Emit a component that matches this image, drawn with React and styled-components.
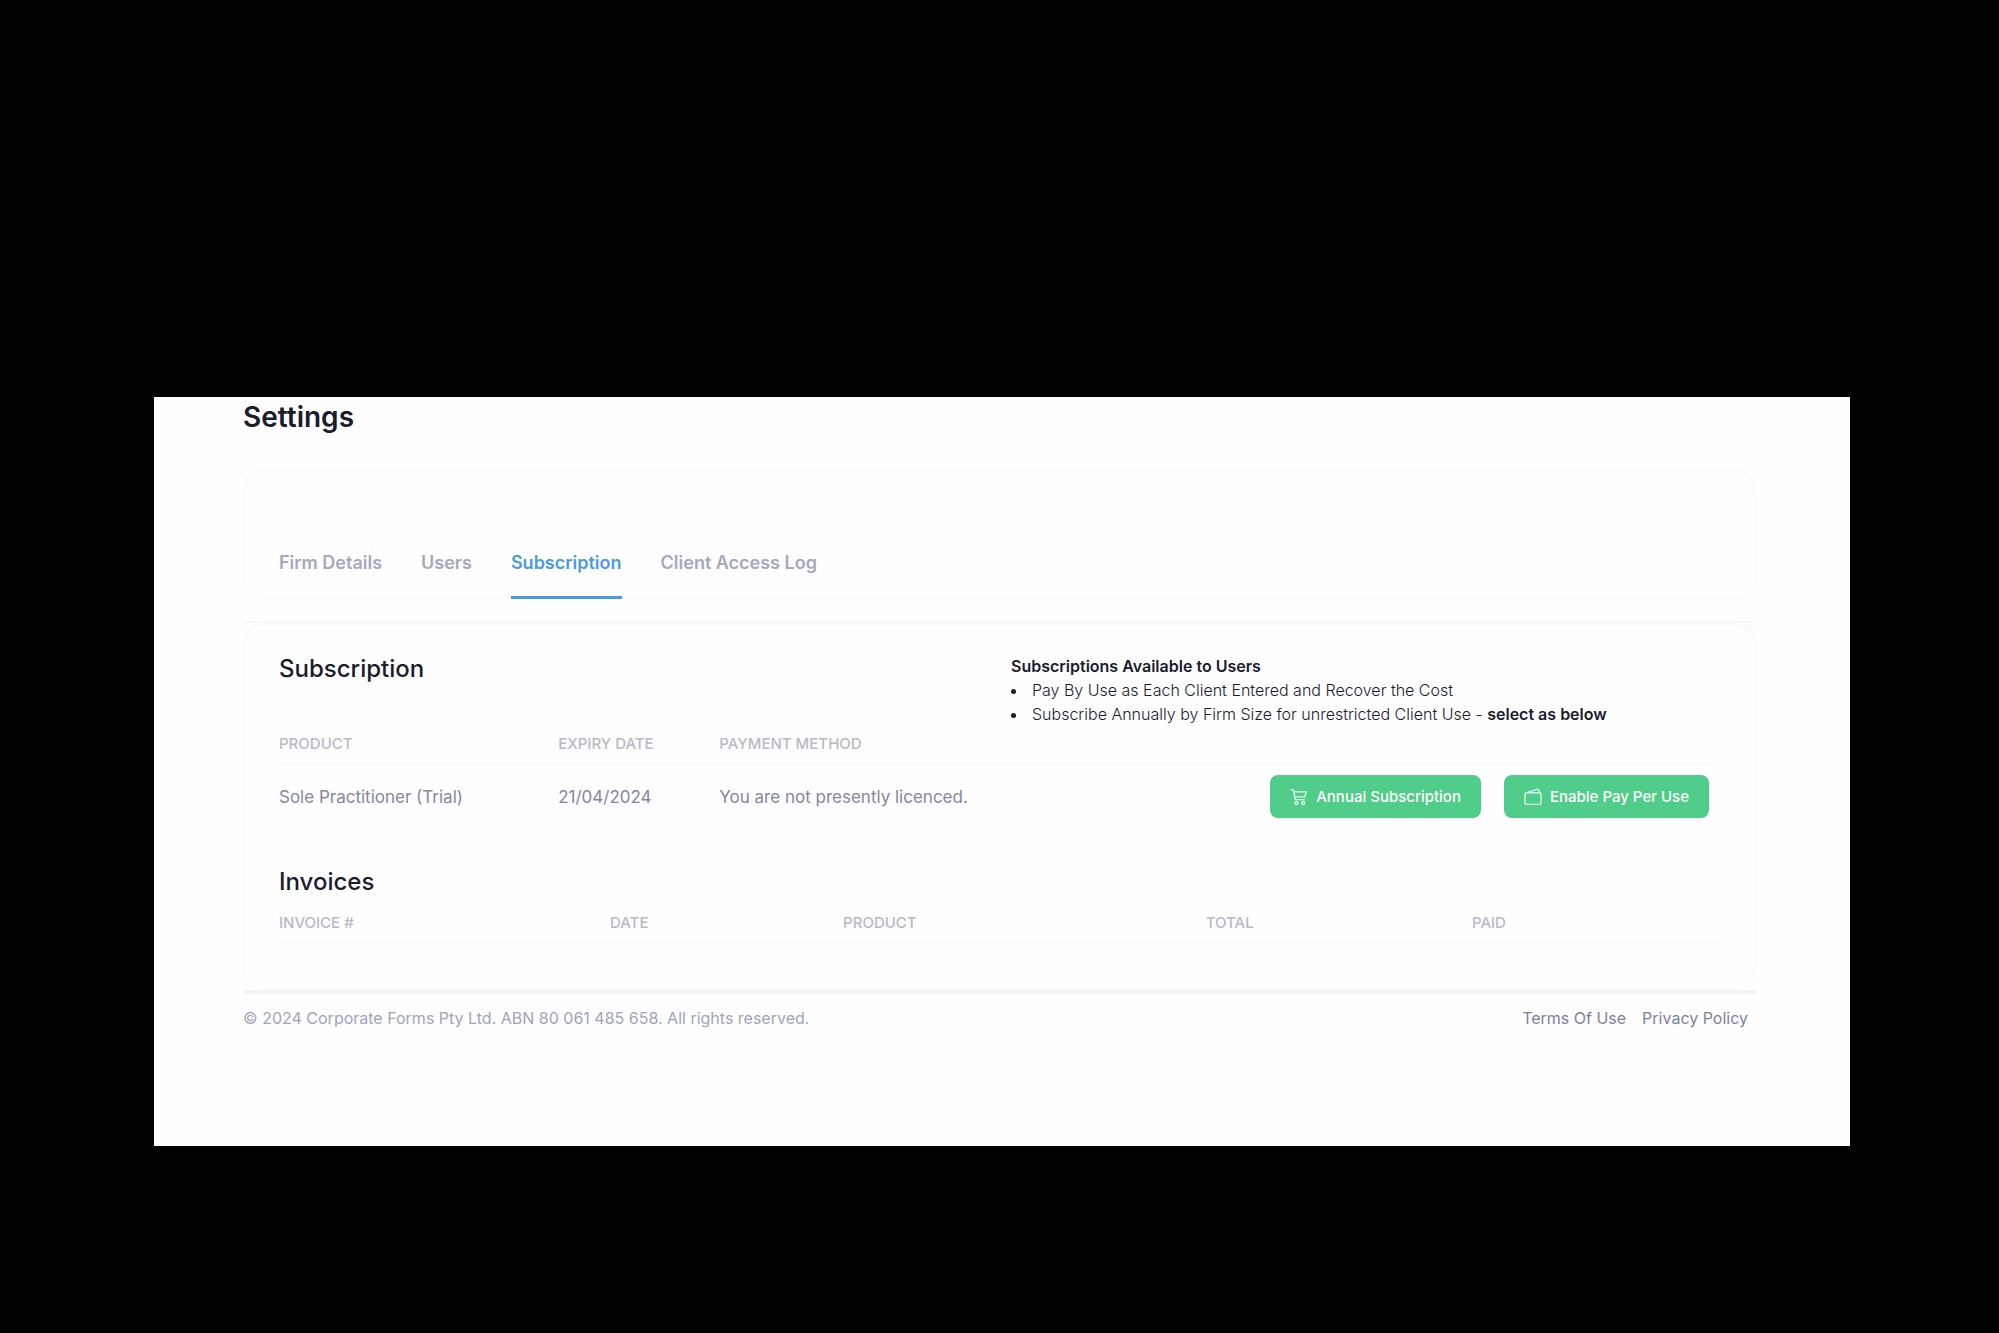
import React from "react";
import styled, { createGlobalStyle } from "styled-components";

const GlobalStyle = createGlobalStyle`
  *, *::before, *::after { box-sizing: border-box; }
  body {
    margin: 0;
    background: #000;
    color: #1a1c2e;
    font-family: Inter, "Liberation Sans", sans-serif;
    font-size: 16px;
    line-height: 24px;
  }
  h1, h2, p, ul { margin: 0; padding: 0; }
`;

const Stage = styled.div`
  padding: 397px 149px 187px 154px;
`;

const Page = styled.main`
  background: #fefefe;
  padding: 0 94px 116px 89px;
`;

const PageTitle = styled.h1`
  padding: 2px 0 35px;
  font-size: 28px;
  line-height: 36px;
  font-weight: 600;
`;

const TabCard = styled.nav`
  display: flex;
  gap: 39px;
  padding: 66px 34px 0;
  border: 2px solid #fafafa;
  border-radius: 20px;
`;

const Tab = styled.a`
  padding: 12px 0 20px;
  margin-bottom: -2px;
  border-bottom: 3px solid ${(p) => (p.$active ? "#4a9be0" : "transparent")};
  color: ${(p) => (p.$active ? "#4a9be0" : "#a5a9b8")};
  font-size: 18px;
  line-height: 26px;
  font-weight: 600;
  text-decoration: none;
`;

const Content = styled.div`
  margin-top: 22px;
  border-top: 2px solid #f7f7f8;
  border-bottom: 4px solid #f4f4f5;
`;

const Card = styled.section`
  padding: 27px 36px 44px 34px;
  border: 2px solid #fafafa;
  border-radius: 20px;
`;

const CardHead = styled.div`
  display: grid;
  grid-template-columns: 732fr 707fr;
  padding-bottom: 6px;
`;

const Heading = styled.h2`
  font-size: 24px;
  line-height: 34px;
  font-weight: 500;
`;

const Notes = styled.div`
  padding-top: 2px;
  font-weight: 300;

  strong { font-weight: 600; }
`;

const NoteList = styled.ul`
  list-style: none;
`;

const Note = styled.li`
  &::before {
    content: "";
    display: inline-block;
    width: 5px;
    height: 5px;
    margin-right: 16px;
    border-radius: 50%;
    background: #1a1c2e;
    vertical-align: middle;
  }
`;

const Table = styled.table`
  width: 100%;
  table-layout: fixed;
  border-collapse: collapse;
  text-align: left;
`;

const Col = styled.col`
  width: ${(p) => p.$w}%;
`;

const HeadCell = styled.th`
  height: 32px;
  padding: 0;
  border-bottom: 2px solid #fafafa;
  color: #b8bac4;
  font-size: 15px;
  font-weight: 500;
  text-transform: uppercase;
  vertical-align: top;
`;

const Cell = styled.td`
  height: 64px;
  padding: 0;
  color: #85889a;
  font-size: 17px;
`;

const Actions = styled.div`
  display: flex;
  justify-content: flex-end;
  gap: 23px;
  padding-right: 9px;
`;

const ActionButton = styled.button`
  display: flex;
  align-items: center;
  gap: 8px;
  height: 43px;
  padding: 0 20px;
  border: 0;
  border-radius: 8px;
  background: #50cd89;
  color: #fff;
  font: 500 15px/24px Inter, "Liberation Sans", sans-serif;
  white-space: nowrap;
`;

const Invoices = styled.div`
  padding-top: 37px;
`;

const InvoiceHeading = styled(Heading)`
  padding-bottom: 12px;
`;

const Footer = styled.footer`
  display: flex;
  justify-content: space-between;
  padding: 12px 8px 0 0;
  color: #a1a5b7;
`;

const FooterLinks = styled.div`
  display: flex;
  gap: 16px;
`;

const FooterLink = styled.a`
  color: #7e8299;
  text-decoration: none;
`;

const CartIcon = () => (
  <svg width="18" height="18" viewBox="0 0 18 18" fill="none" stroke="#d8f8e5" strokeWidth="1.4" strokeLinecap="round" strokeLinejoin="round" aria-hidden="true">
    <path d="M1.2 1.8h2.2l1.9 9.8h9.1M3.8 3.7h12.4l-1.3 5.2H4.9" />
    <circle cx="6.4" cy="15" r="1.5" />
    <circle cx="13.2" cy="15" r="1.5" />
  </svg>
);

const WalletIcon = () => (
  <svg width="18" height="18" viewBox="0 0 18 18" fill="none" stroke="#d8f8e5" strokeWidth="1.4" strokeLinecap="round" strokeLinejoin="round" aria-hidden="true">
    <rect x="1" y="4.8" width="16" height="11.6" rx="1.6" />
    <path d="M1.8 4.8 12.9 1.3a1.5 1.5 0 0 1 2 1.1l.7 2.4" />
  </svg>
);

const tabs = ["Firm Details", "Users", "Subscription", "Client Access Log"];

const invoiceColumns = [
  { label: "Invoice #", width: 23 },
  { label: "Date", width: 16.2 },
  { label: "Product", width: 25.2 },
  { label: "Total", width: 18.5 },
  { label: "Paid", width: 17.1 },
];

export default function App() {
  return (
    <Stage>
      <GlobalStyle />
      <Page>
        <PageTitle>Settings</PageTitle>
        <TabCard aria-label="Settings sections">
          {tabs.map((tab) => (
            <Tab key={tab} href="#" $active={tab === "Subscription"}>
              {tab}
            </Tab>
          ))}
        </TabCard>
        <Content>
          <Card>
            <CardHead>
              <Heading>Subscription</Heading>
              <Notes>
                <p><strong>Subscriptions Available to Users</strong></p>
                <NoteList>
                  <Note>Pay By Use as Each Client Entered and Recover the Cost</Note>
                  <Note>
                    Subscribe Annually by Firm Size for unrestricted Client Use - <strong>select as below</strong>
                  </Note>
                </NoteList>
              </Notes>
            </CardHead>
            <Table>
              <colgroup>
                <Col $w={19.4} />
                <Col $w={11.2} />
                <Col $w={20} />
                <Col $w={49.4} />
              </colgroup>
              <thead>
                <tr>
                  <HeadCell>Product</HeadCell>
                  <HeadCell>Expiry Date</HeadCell>
                  <HeadCell>Payment Method</HeadCell>
                  <HeadCell aria-label="Actions" />
                </tr>
              </thead>
              <tbody>
                <tr>
                  <Cell>Sole Practitioner (Trial)</Cell>
                  <Cell>21/04/2024</Cell>
                  <Cell>You are not presently licenced.</Cell>
                  <Cell>
                    <Actions>
                      <ActionButton type="button"><CartIcon />Annual Subscription</ActionButton>
                      <ActionButton type="button"><WalletIcon />Enable Pay Per Use</ActionButton>
                    </Actions>
                  </Cell>
                </tr>
              </tbody>
            </Table>
            <Invoices>
              <InvoiceHeading>Invoices</InvoiceHeading>
              <Table>
                <colgroup>
                  {invoiceColumns.map((c) => <Col key={c.label} $w={c.width} />)}
                </colgroup>
                <thead>
                  <tr>
                    {invoiceColumns.map((c) => <HeadCell key={c.label}>{c.label}</HeadCell>)}
                  </tr>
                </thead>
              </Table>
            </Invoices>
          </Card>
        </Content>
        <Footer>
          <p>© 2024 Corporate Forms Pty Ltd. ABN 80 061 485 658. All rights reserved.</p>
          <FooterLinks>
            <FooterLink href="#">Terms Of Use</FooterLink>
            <FooterLink href="#">Privacy Policy</FooterLink>
          </FooterLinks>
        </Footer>
      </Page>
    </Stage>
  );
}
